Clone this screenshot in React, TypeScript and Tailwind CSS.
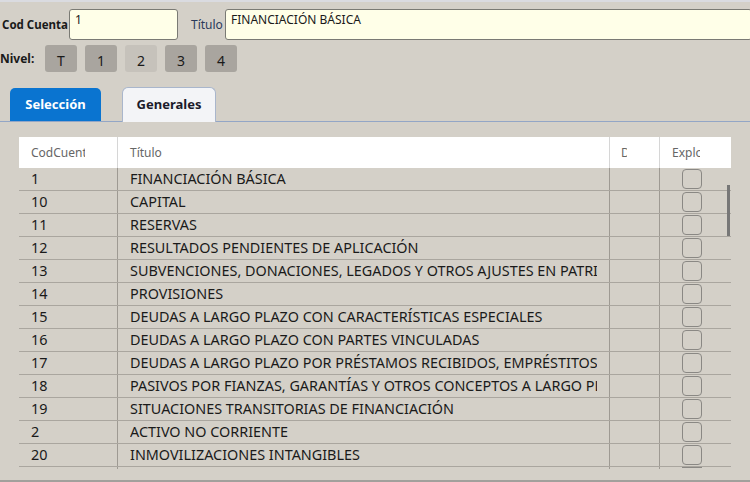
import React from 'react';

const rows: [string, string][] = [
  ['1', 'FINANCIACIÓN BÁSICA'],
  ['10', 'CAPITAL'],
  ['11', 'RESERVAS'],
  ['12', 'RESULTADOS PENDIENTES DE APLICACIÓN'],
  ['13', 'SUBVENCIONES, DONACIONES, LEGADOS Y OTROS AJUSTES EN PATRIMONIO NETO'],
  ['14', 'PROVISIONES'],
  ['15', 'DEUDAS A LARGO PLAZO CON CARACTERÍSTICAS ESPECIALES'],
  ['16', 'DEUDAS A LARGO PLAZO CON PARTES VINCULADAS'],
  ['17', 'DEUDAS A LARGO PLAZO POR PRÉSTAMOS RECIBIDOS, EMPRÉSTITOS Y OTROS CONCEPTOS'],
  ['18', 'PASIVOS POR FIANZAS, GARANTÍAS Y OTROS CONCEPTOS A LARGO PLAZO'],
  ['19', 'SITUACIONES TRANSITORIAS DE FINANCIACIÓN'],
  ['2', 'ACTIVO NO CORRIENTE'],
  ['20', 'INMOVILIZACIONES INTANGIBLES'],
];

const niveles = ['T', '1', '2', '3', '4'];

const App = (): React.ReactNode => {
  return (
    <div className="w-[750px] h-[482px] overflow-hidden bg-[#d4d0c8] font-['Noto_Sans',sans-serif] text-[#1a1a1a] flex flex-col">
      <div className="h-[2px] bg-[#dadbe0] shrink-0"></div>

      {/* Cabecera */}
      <div className="flex items-center h-[31px] mt-[7px]">
        <span className="ml-[2px] text-[11.5px] font-bold w-[67px] whitespace-nowrap shrink-0">Cod Cuenta</span>
        <div className="w-[109px] h-[31px] bg-[#ffffe8] border border-[#7a7a74] rounded-[3px] px-[5px] pt-[1px] text-[12px] leading-[18px] shrink-0">1</div>
        <span className="ml-[13px] w-[34px] text-[12px] text-[#2a3a5a] shrink-0">Título</span>
        <div className="w-[527px] h-[31px] bg-[#ffffe8] border border-[#7a7a74] rounded-[3px] px-[5px] pt-[1px] text-[12px] leading-[18px] shrink-0">FINANCIACIÓN BÁSICA</div>
      </div>

      {/* Nivel */}
      <div className="flex items-center h-[27px] mt-[5px]">
        <span className="text-[12px] font-bold w-[45px]">Nivel:</span>
        <div className="flex gap-[8px]">
          {niveles.map((n) => (
            <div
              key={n}
              className={
                n === '2'
                  ? 'w-[32px] h-[27px] rounded-[3px] bg-[#c6c2bb] flex items-center justify-center text-[14px] pt-[3px]'
                  : 'w-[32px] h-[27px] rounded-[3px] bg-[#a9a59f] flex items-center justify-center text-[14px] pt-[3px]'
              }
            >
              {n}
            </div>
          ))}
        </div>
      </div>

      {/* Pestañas */}
      <div className="flex items-end h-[35px] mt-[15px] border-b border-[#93a6c6]">
        <div className="ml-[10px] w-[91px] h-[33px] bg-[#0a74d0] rounded-t-[5px] text-white text-[13px] font-bold flex items-center justify-center">Selección</div>
        <div className="ml-[21px] w-[94px] h-[35px] bg-[#f3f4f7] border border-b-0 border-[#a9b6cc] rounded-t-[6px] text-[13px] font-bold text-[#1b1b2b] flex items-center justify-center -mb-px">Generales</div>
      </div>

      {/* Rejilla */}
      <div className="ml-[19px] mt-[15px] w-[712px] relative">
        <div className="flex h-[31px] bg-white text-[12px] text-[#666]">
          <div className="w-[99px] pl-[12px] pr-[32px] flex items-center overflow-hidden whitespace-nowrap border-r border-[#d6d6d6]">
            <span className="overflow-hidden">CodCuenta</span>
          </div>
          <div className="w-[492px] pl-[12px] flex items-center border-r border-[#d6d6d6]">Título</div>
          <div className="w-[50px] pl-[11px] pr-[32px] flex items-center overflow-hidden border-r border-[#d6d6d6]">
            <span className="overflow-hidden">D</span>
          </div>
          <div className="flex-1 pl-[12px] pr-[31px] flex items-center overflow-hidden whitespace-nowrap">
            <span className="overflow-hidden">Explo</span>
          </div>
        </div>
        {rows.map(([cod, titulo]) => (
          <div key={cod} className="flex h-[23px] border-b border-[#aaa69f] text-[14.4px] leading-[22px]">
            <div className="w-[99px] pl-[12px] border-r border-[#9e9a93]">{cod}</div>
            <div className="w-[492px] pl-[12px] pr-[12px] border-r border-[#9e9a93] overflow-hidden whitespace-nowrap">
              <div className="overflow-hidden">{titulo}</div>
            </div>
            <div className="w-[50px] border-r border-[#9e9a93]"></div>
            <div className="flex-1 pl-[22px] flex items-center">
              <div className="w-[20px] h-[20px] rounded-[4px] border-[1.5px] border-[#8a8884]"></div>
            </div>
          </div>
        ))}
        <div className="flex h-[2px]">
          <div className="w-[99px] border-r border-[#9e9a93]"></div>
          <div className="w-[492px] border-r border-[#9e9a93]"></div>
          <div className="w-[50px] border-r border-[#9e9a93]"></div>
          <div className="flex-1 pl-[22px]">
            <div className="w-[20px] h-[2px] border-t-[1.5px] border-[#8a8884]"></div>
          </div>
        </div>
        <div className="absolute left-[708px] top-[48px] w-[3px] h-[51px] bg-[#777]"></div>
      </div>

      <div className="mt-auto h-[2px] bg-[#a2a09c]"></div>
    </div>
  );
};

export default App;
